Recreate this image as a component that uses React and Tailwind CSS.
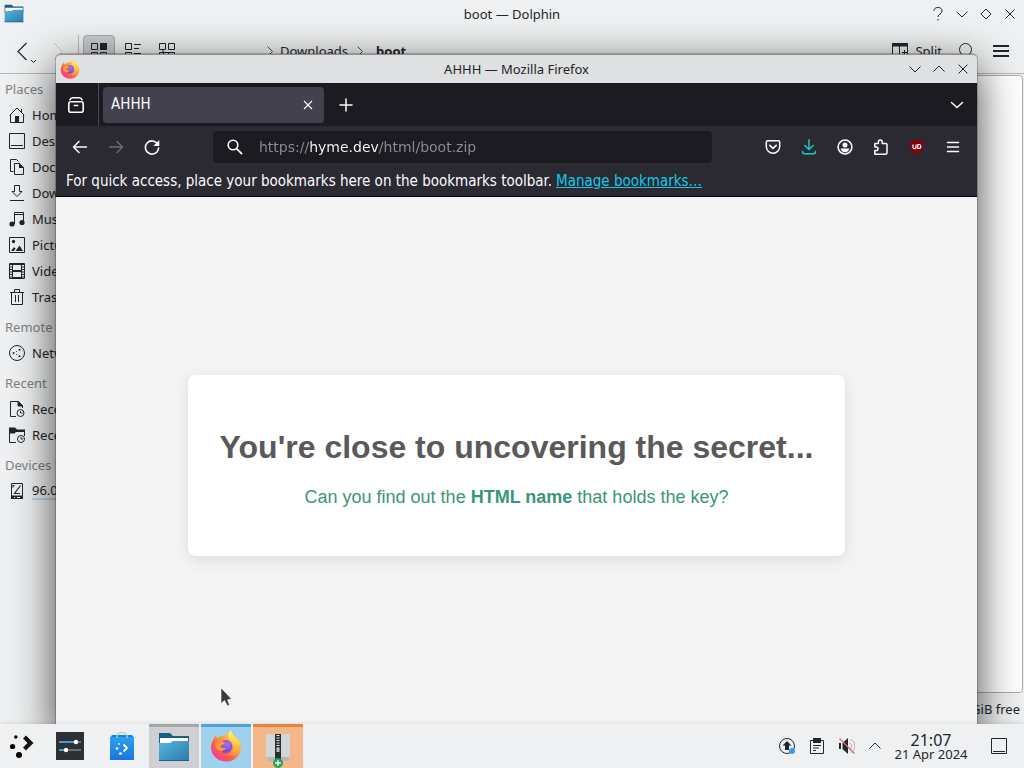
import React from "react";

const sans = "font-['Noto_Sans',sans-serif]";

/* ---------- shared glyphs ---------- */

function Svg({ size = 16, box = 16, className = "", children }) {
  return (
    <svg
      width={size}
      height={size}
      viewBox={`0 0 ${box} ${box}`}
      fill="none"
      stroke="currentColor"
      className={`shrink-0 ${className}`}
      aria-hidden="true"
    >
      {children}
    </svg>
  );
}

const Down = () => <Svg><path d="M2.5 5.5 8 11l5.500-5.500" /></Svg>;
const Up = () => <Svg><path d="M2.500 10.500 8 5l5.500 5.500" /></Svg>;
const Cross = () => <Svg><path d="m3.500 3.500 9 9m0-9-9 9" /></Svg>;
const Crumb = () => <Svg className="text-[#4a4d50]"><path d="m5.500 3.500 5 5-5 5" /></Svg>;

function FolderIcon({ size, id }) {
  return (
    <svg width={size} height={size} viewBox="0 0 32 32" aria-hidden="true" className="shrink-0">
      <defs>
        <linearGradient id={id} x1="0" y1="0" x2="1" y2="1">
          <stop offset="0" stopColor="#56b7df" />
          <stop offset="1" stopColor="#2a79ab" />
        </linearGradient>
      </defs>
      <path d="M1 1h11l3 3h16v10H1z" fill="#1b5f82" />
      <path d="M2 6h28v8H2z" fill="#fff" />
      <path d="M1 11h11l3-2h16v20H1z" fill={`url(#${id})`} />
      <path d="M1 28h30v1H1z" fill="#1f5f88" />
    </svg>
  );
}

function FirefoxLogo({ size, id }) {
  return (
    <svg width={size} height={size} viewBox="0 0 32 32" aria-hidden="true" className="shrink-0">
      <defs>
        <linearGradient id={`${id}a`} x1="0.850" y1="0.100" x2="0.150" y2="0.950">
          <stop offset="0" stopColor="#ffe94a" />
          <stop offset="0.350" stopColor="#ffa63a" />
          <stop offset="0.650" stopColor="#ff5f52" />
          <stop offset="1" stopColor="#f0389a" />
        </linearGradient>
        <radialGradient id={`${id}b`} cx="0.600" cy="0.300" r="0.800">
          <stop offset="0" stopColor="#a66cf0" />
          <stop offset="1" stopColor="#6548c4" />
        </radialGradient>
        <linearGradient id={`${id}c`} x1="0.500" y1="0" x2="0.500" y2="1">
          <stop offset="0" stopColor="#fff36b" />
          <stop offset="0.500" stopColor="#ffcf4c" />
          <stop offset="1" stopColor="#ff8a48" />
        </linearGradient>
      </defs>
      <path
        d="M2.500 11.500C3.200 8.500 5 6.300 6.300 5.200c0 1.700.4 2.700 1.100 3.400C9.800 6 13.500 5 16.500 5.300 18 3.200 19.400 1.300 21 .2c.4 3 2.200 4.600 4.200 6.600 1 1 1.600 2 2 3l.8-1.600c2 3 3.300 6.300 3 10.200C30.400 26 24 31.600 16 31.600S1.400 25.500 1 18c-.1-2.300.5-4.700 1.500-6.500z"
        fill={`url(#${id}a)`}
      />
      <circle cx="16" cy="16.500" r="6.400" fill={`url(#${id}b)`} />
      <path
        d="M21 .2c-2.600 3.200-3.400 6-1.600 8.700 2 2.500 4.400 4.600 4.200 8.400-.2 4.300-3 7.300-6.900 8.100 6.300 1.700 12.800-2.700 12.700-9.600C29.400 9 22.400 6.600 21 .2z"
        fill={`url(#${id}c)`}
      />
      <path
        d="M5.200 12.600c1.700-1.500 4-1.700 6-.8 1.800-.3 3 .1 4 1.200-1 1.400-2.500 1.900-4.200 2.100-.5 1.600.3 2.600 1.800 2.900 1.500.1 2.200 0 3.200.1-1.300 2.300-4.100 3.700-7.100 2.500-3-1.200-4.100-4.300-3.700-8z"
        fill="#ff9537"
      />
    </svg>
  );
}

/* ---------- file manager ---------- */

const placeIcons = {
  home: (
    <Svg>
      <path d="M.7 8.300 8 1l7.300 7.300M1.500 8v7.500h13V8M12.500 2v3" />
      <path d="M6 9h4v6.500H6z" fill="currentColor" stroke="none" />
    </Svg>
  ),
  desktop: <Svg><path d="M.5.5h15v15H.5zM2 12.500h12" /></Svg>,
  documents: (
    <Svg>
      <path d="M4.500 12.500h-3V.5h6l2 2M5.500 4.500h5l4 4v7h-9z" />
      <path d="M10 3.500v5.500h5.200z" fill="currentColor" stroke="none" />
    </Svg>
  ),
  downloads: <Svg><path d="M1 15.500h14M5.500.5h5v6H13l-5 5-5-5h2.500z" /></Svg>,
  music: (
    <Svg>
      <path d="M5.500 13V1.500h9V11M5.500 3.500h9" />
      <circle cx="3" cy="13" r="2.600" fill="currentColor" stroke="none" />
      <circle cx="13" cy="11.500" r="2.600" fill="currentColor" stroke="none" />
    </Svg>
  ),
  pictures: (
    <Svg>
      <path d="M.5.5h15v15H.5z" />
      <circle cx="4.500" cy="4.500" r="1.700" fill="currentColor" stroke="none" />
      <path d="m2 14 3-4 1.500 1.500L5 14zM6.500 14l4-5.500L14 14z" fill="currentColor" stroke="none" />
    </Svg>
  ),
  videos: (
    <Svg>
      <path d="M.5.500h15v15H.5zM3.500 0v16M12.500 0v16M4 1.500h8M4 14.500h8" />
      <path d="M4 8h8" strokeWidth="2" />
      <path d="M2 1v14M14 1v14" strokeWidth="2" strokeDasharray="1 1.500" />
    </Svg>
  ),
  trash: <Svg><path d="M1 3.500h14M5.500 3V.5h5V3M2.500 3.500v12h11v-12M6.500 6v7M9.500 6v7" /></Svg>,
  network: (
    <Svg>
      <circle cx="8" cy="8" r="7.500" />
      <g fill="currentColor" stroke="none">
        <circle cx="4.600" cy="8" r="1" />
        <circle cx="10.500" cy="4.800" r="1" />
        <circle cx="10.500" cy="11.200" r="1" />
        <circle cx="7.500" cy="6.400" r=".5" />
        <circle cx="7.500" cy="9.600" r=".5" />
      </g>
    </Svg>
  ),
  files: (
    <Svg>
      <path d="M7 15.500H1.500V.5h8l4 4V7" />
      <path d="M9 .5V5h5z" fill="currentColor" />
      <circle cx="11.500" cy="12" r="3.500" />
      <path d="M11.500 10v2h2" />
    </Svg>
  ),
  locations: (
    <Svg>
      <path d="M7 15.500H.5V2M15.500 4v5" />
      <path d="M0 .5h6l2 2h8V5H7L5.500 6.500H0z" fill="currentColor" stroke="none" />
      <circle cx="12" cy="12" r="3.500" />
      <path d="M12 10v2h2" />
    </Svg>
  ),
  drive: (
    <Svg>
      <path d="M2.500.5h11v15h-11z" />
      <path d="M2.500 13h11v2.500h-11z" fill="currentColor" />
      <path d="M11.500 2.500 5.500 10.500H11M5.500 2.500h-1.500v2" strokeWidth="1.200" />
      <path d="M5 14.500h1M8 14.500h3" stroke="#fff" />
    </Svg>
  ),
};

const places = [
  { title: "Places", items: [["home", "Home"], ["desktop", "Desktop"], ["documents", "Documents"], ["downloads", "Downloads"], ["music", "Music"], ["pictures", "Pictures"], ["videos", "Videos"], ["trash", "Trash"]] },
  { title: "Remote", items: [["network", "Network"]] },
  { title: "Recent", items: [["files", "Recent Files"], ["locations", "Recent Locations"]] },
];

function WindowButton({ label, children }) {
  return (
    <button aria-label={label} className="flex size-6 items-center justify-center">
      {children}
    </button>
  );
}

function SectionTitle({ children }) {
  return <h2 className="flex h-[26px] items-center pt-0.5 pl-[5px] text-[#7f8284]">{children}</h2>;
}

function FileManager() {
  return (
    <section aria-label="boot — Dolphin" className="flex h-full flex-col bg-[#eff0f1] text-[13px] text-[#232629]">
      <header className="grid h-7 grid-cols-[1fr_auto_1fr] items-center">
        <span className="pl-1"><FolderIcon size={20} id="folderTitle" /></span>
        <span className="pt-0.5">boot — Dolphin</span>
        <div className="flex justify-end pr-0.5">
          <WindowButton label="Help">
            <Svg><path d="M4 5c0-2.500 1.500-3.500 4-3.500s4 1 4 3.500c0 3-4 3-4 6M8 13v1.500" /></Svg>
          </WindowButton>
          <WindowButton label="Minimize"><Down /></WindowButton>
          <WindowButton label="Maximize"><Svg><path d="m8 3 5 5-5 5-5-5z" /></Svg></WindowButton>
          <WindowButton label="Close"><Cross /></WindowButton>
        </div>
      </header>

      <div className="flex h-[46px] items-center border-b border-[#b4b6b8] pr-[15px]">
        <button aria-label="Back" className="flex h-8 w-[38px] items-center justify-end">
          <Svg size={24} box={24}><path d="M12.500 4 4 12.500l8.500 8.500" strokeWidth="1.200" /><path d="m17 21 2.500 2.500L22 21" /></Svg>
        </button>
        <button aria-label="Forward" className="flex h-8 w-10 items-center justify-center text-[#c3c5c7]">
          <Svg size={24} box={24}><path d="m8 4 8.500 8.500L8 21" /></Svg>
        </button>
        <span className="h-8 w-px bg-[#b9bbbd]" />
        <div className="ml-1 flex gap-0.5">
          <button aria-label="Icons view" className="flex size-8 items-center justify-center rounded-sm border border-[#a9abad] bg-[#c9cbcd]">
            <Svg><path d="M.5.500h6v6h-6zM.5 9.500h6v6h-6zM9.500 9.500h6v6h-6z" /><path d="M9 0h7v7H9z" fill="currentColor" stroke="none" /></Svg>
          </button>
          <button aria-label="Compact view" className="flex size-8 items-center justify-center">
            <Svg><path d="M.5.500h6v6h-6zM.5 9.500h6v6h-6zM9 1.500h7M9 5.500h5M9 10.500h7M9 14.500h5" /></Svg>
          </button>
          <button aria-label="Details view" className="flex size-8 items-center justify-center">
            <Svg><path d="M.5.500h6v6h-6zM9.500.500h6v6h-6zM.5 9.500h4v6h-4zM9.500 9.500h6v6h-6zM4 6.500v3h6" /></Svg>
          </button>
        </div>
        <nav aria-label="Location" className="ml-[79px] flex flex-1 items-center">
          <Crumb />
          <a href="#downloads" className="mr-1 ml-0.5 pt-0.5">Downloads</a>
          <Crumb />
          <a href="#boot" className="ml-2 pt-0.5 font-bold">boot</a>
        </nav>
        <button className="mr-4 flex items-center gap-[7px]">
          <Svg><path d="M.5 2v13.500h15V2M7.500 2v14M10 9.500h5M12.500 7v5" /><path d="M0 0h16v3.500H0z" fill="currentColor" stroke="none" /></Svg>
          <span className="pt-0.5">Split</span>
        </button>
        <button aria-label="Search" className="mr-[19px]"><Svg><circle cx="7.500" cy="6.500" r="6" /><path d="m12 11 4 4.500" /></Svg></button>
        <button aria-label="Menu"><Svg><path d="M0 3h16M0 8h16M0 13h16" strokeWidth="2" /></Svg></button>
      </div>

      <div className="flex min-h-0 flex-1">
        <aside className="w-44 pt-0.5">
          {places.map((g, i) => (
            <div key={g.title} className={i ? "pt-1" : ""}>
              <SectionTitle>{g.title}</SectionTitle>
              <ul>
                {g.items.map(([icon, name]) => (
                  <li key={name} className="flex h-[26px] items-center gap-[7px] pl-[9px] whitespace-nowrap">
                    {placeIcons[icon]}
                    <span className="pt-0.5">{name}</span>
                  </li>
                ))}
              </ul>
            </div>
          ))}
          <div className="pt-1">
            <SectionTitle>Devices</SectionTitle>
            <div className="flex h-[26px] items-center gap-[7px] pl-[9px]">
              {placeIcons.drive}
              <span className="flex-1 border-b-2 border-[#bcd8ec] leading-4 whitespace-nowrap">96.0 GiB Drive</span>
            </div>
          </div>
        </aside>
        <div className="flex flex-1 flex-col">
          <div className="mt-px mr-px flex-1 rounded border border-[#a9abad] bg-white" />
          <p className="flex h-[31px] items-center justify-end pt-0.5 pr-1">GiB free</p>
        </div>
      </div>
    </section>
  );
}

/* ---------- browser ---------- */

function ToolButton({ label, className = "", children }) {
  return (
    <button aria-label={label} className={`flex h-8 w-9 items-center justify-center ${className}`}>
      {children}
    </button>
  );
}

function Browser() {
  return (
    <section
      aria-label="AHHH — Mozilla Firefox"
      className="absolute top-[54px] right-[47px] -bottom-[10px] left-[56px] flex flex-col rounded-t-[5px] font-['DejaVu_Sans_Condensed','DejaVu_Sans',sans-serif] shadow-[0_0_0_1px_rgba(0,0,0,0.2),0_12px_44px_rgba(0,0,0,0.75)]"
    >
      <header className="grid h-[29px] grid-cols-[1fr_auto_1fr] items-center rounded-t-[5px] border-t border-[#8f9193] bg-[#dee0e2] font-['Noto_Sans',sans-serif] text-[13px] text-[#232629]">
        <span className="pl-1"><FirefoxLogo size={20} id="ffTitle" /></span>
        <span className="pt-0.5">AHHH — Mozilla Firefox</span>
        <div className="flex justify-end pr-0.5">
          <WindowButton label="Minimize"><Down /></WindowButton>
          <WindowButton label="Maximize"><Up /></WindowButton>
          <WindowButton label="Close"><Cross /></WindowButton>
        </div>
      </header>

      <div className="flex h-[43px] items-center bg-[#1c1b22] text-[#fbfbfe]">
        <button aria-label="Firefox View" className="flex w-[42px] justify-center pr-0.5">
          <Svg>
            <rect x=".8" y="4.800" width="14.400" height="10.400" rx="2" strokeWidth="1.600" />
            <path d="M2 2.800C2.400 1.500 3 .8 4.500.8h7c1.500 0 2.100.7 2.500 2M6.300 8.500h3.400" strokeWidth="1.600" strokeLinecap="round" />
          </Svg>
        </button>
        <span className="h-full w-px bg-[#4c4b55]" />
        <div className="ml-1 flex h-9 w-[221px] items-center justify-between rounded bg-[#42414d] pr-2 pl-2 text-[15px]">
          <span>AHHH</span>
          <button aria-label="Close tab"><Svg><path d="m4 4 8 8m0-8-8 8" strokeWidth="1.200" /></Svg></button>
        </div>
        <button aria-label="New tab" className="ml-3.5"><Svg><path d="M8 2v12M2 8h12" strokeWidth="1.500" strokeLinecap="round" /></Svg></button>
        <button aria-label="List all tabs" className="mr-3 ml-auto"><Svg><path d="m2.500 5.500 5.500 5 5.500-5" strokeWidth="1.500" strokeLinecap="round" /></Svg></button>
      </div>

      <div className="flex h-[42px] items-center bg-[#2b2a33] px-1.5 text-[#fbfbfe]">
        <ToolButton label="Back"><Svg><path d="M14.500 8H2M7 2.500 1.500 8 7 13.500" strokeWidth="1.500" strokeLinecap="round" strokeLinejoin="round" /></Svg></ToolButton>
        <ToolButton label="Forward" className="text-[#6c6b74]"><Svg><path d="M1.500 8H14M9 2.500 14.500 8 9 13.500" strokeWidth="1.500" strokeLinecap="round" strokeLinejoin="round" /></Svg></ToolButton>
        <ToolButton label="Reload">
          <Svg><path d="M13.800 5.300A6.600 6.600 0 1 0 14.600 9" strokeWidth="1.600" strokeLinecap="round" /><path d="M15.300 1v6H9.400z" fill="currentColor" stroke="none" /></Svg>
        </ToolButton>
        <div className="mx-[43px] flex h-8 flex-1 items-center gap-4 rounded bg-[#1c1b22] pl-3.5">
          <Svg><circle cx="6" cy="6" r="4.800" strokeWidth="1.600" /><path d="m9.600 9.600 5 5" strokeWidth="1.700" strokeLinecap="round" /></Svg>
          <input
            aria-label="Address"
            defaultValue="https://hyme.dev/html/boot.zip"
            className="h-6 min-w-0 flex-1 bg-[linear-gradient(90deg,#8d8c93_50px,#fbfbfe_50px,#fbfbfe_120px,#8d8c93_120px)] bg-clip-text font-['DejaVu_Sans',sans-serif] text-[14px] text-transparent outline-none"
          />
        </div>
        <ToolButton label="Save to Pocket">
          <Svg><path d="M2.800 1.800h10.400c.9 0 1.500.6 1.500 1.500V7.500a6.700 6.700 0 0 1-13.400 0V3.300c0-.9.6-1.500 1.500-1.500z" strokeWidth="1.500" /><path d="M4.800 6.300 8 9.300l3.200-3" strokeWidth="1.600" strokeLinecap="round" /></Svg>
        </ToolButton>
        <ToolButton label="Downloads" className="text-[#19c9c4]">
          <Svg><path d="M8 .8v9.500M3.800 6.500 8 10.500l4.200-4M1.500 12.500c0 1.700.7 2.200 2 2.200h9c1.300 0 2-.5 2-2.200" strokeWidth="1.500" strokeLinecap="round" /></Svg>
        </ToolButton>
        <ToolButton label="Account">
          <Svg><circle cx="8" cy="8" r="6.900" strokeWidth="1.500" /><circle cx="8" cy="6" r="2.500" fill="currentColor" stroke="none" /><path d="M3.600 9.600h8.800c-.5 2.400-2.200 3.700-4.400 3.700s-3.900-1.300-4.400-3.700z" fill="currentColor" stroke="none" /></Svg>
        </ToolButton>
        <ToolButton label="Extensions">
          <Svg><path d="M1.800 15.200V11.500h1.400a1.800 1.800 0 0 0 0-3.600H1.800V4.500h3.600V2.900a1.900 1.900 0 0 1 3.800 0v1.600h3.500c.8 0 1.300.5 1.300 1.300v8c0 .8-.5 1.400-1.300 1.400z" strokeWidth="1.500" strokeLinejoin="round" /></Svg>
        </ToolButton>
        <ToolButton label="uBlock Origin">
          <Svg>
            <path d="M8 .3C6 1.800 3.500 2.200 1 2.200c0 6 .5 10.500 7 13.500 6.500-3 7-7.500 7-13.500C12.500 2.200 10 1.800 8 .3z" fill="#850009" stroke="none" />
            <path d="M4 5.500v2.700a1.500 1.500 0 0 0 3 0V5.500M8.800 5.500v4h1.200a1.800 2 0 0 0 0-4z" stroke="#fff" strokeWidth="1.200" />
          </Svg>
        </ToolButton>
        <ToolButton label="Application menu"><Svg><path d="M2.500 3.500h11M2.500 8h11M2.500 12.500h11" strokeWidth="1.500" strokeLinecap="round" /></Svg></ToolButton>
      </div>

      <p className="flex h-[29px] items-center gap-1 border-b border-black bg-[#2b2a33] pb-0.5 pl-2.5 text-[15px] whitespace-nowrap text-[#fbfbfe]">
        For quick access, place your bookmarks here on the bookmarks toolbar.
        <a href="#bookmarks" className="text-[#10c9e8] underline">Manage bookmarks…</a>
      </p>

      <main className="flex flex-1 items-center justify-center bg-[#f4f4f4] font-['Liberation_Sans',Arial,sans-serif]">
        <div className="rounded-lg bg-white px-8 pt-[54px] pb-[49px] text-center shadow-[0_4px_16px_rgba(0,0,0,0.1)]">
          <h1 className="text-[32px] leading-[37px] font-bold text-[#5a5a5a]">You're close to uncovering the secret...</h1>
          <p className="mt-[21px] text-[18px] leading-5 text-[#3a9679]">
            Can you find out the <strong>HTML name</strong> that holds the key?
          </p>
        </div>
      </main>
    </section>
  );
}

/* ---------- panel ---------- */

function Task({ label, className = "", children }) {
  return (
    <button aria-label={label} className={`flex w-[50px] items-center justify-center ${className}`}>
      {children}
    </button>
  );
}

function Panel() {
  return (
    <footer className="relative flex h-11 shrink-0 items-stretch bg-[#eff0f2] text-[#232629] shadow-[0_-1px_4px_rgba(0,0,0,0.1)]">
      <div className="flex flex-1 gap-0.5">
        <button aria-label="Application launcher" className="flex w-[43px] items-center justify-center">
          <svg width="24" height="24" viewBox="0 0 24 24" aria-hidden="true">
            <circle cx="5.800" cy="3" r="1.700" /><circle cx="2.600" cy="12.500" r="2.600" /><circle cx="9" cy="21" r="3" />
            <path d="m14.500 3 6 6-6 6" fill="none" stroke="#111" strokeWidth="4.200" />
          </svg>
        </button>
        <Task label="System Settings">
          <svg width="28" height="28" viewBox="0 0 28 28" aria-hidden="true">
            <path d="M0 0h28v28H0z" fill="#2d3136" />
            <path d="M3 10h22M3 18h22" stroke="#686e74" strokeWidth="2" />
            <path d="M3 10h16M3 18h6" stroke="#3daee9" strokeWidth="1.500" />
            <circle cx="20" cy="10" r="2.200" fill="#fff" /><circle cx="10" cy="18" r="2.200" fill="#fff" />
          </svg>
        </Task>
        <Task label="Discover">
          <svg width="28" height="28" viewBox="0 0 28 28" aria-hidden="true">
            <defs><linearGradient id="bag" x1="0" y1="0" x2="0" y2="1"><stop offset="0" stopColor="#2aa2f0" /><stop offset="1" stopColor="#1b74dc" /></linearGradient></defs>
            <path d="M4 3h20l2 3H2z" fill="#1d7fc5" />
            <path d="M2 5h24v23H2z" fill="url(#bag)" />
            <path d="M9 6V4.500a5 4 0 0 1 10 0V6" fill="none" stroke="#a5d2df" strokeWidth="1.400" />
            <path d="m15.500 12.500 3.500 3.500-3.500 3.500" fill="none" stroke="#fff" strokeWidth="1.800" />
            <g fill="#cfe8ff"><circle cx="11" cy="12" r="1" /><circle cx="9" cy="16.500" r="1.400" /><circle cx="12.500" cy="21.500" r="1.600" /></g>
          </svg>
        </Task>
        <Task label="boot — Dolphin" className="border-t-[3px] border-[#a5a6a8] bg-[#cfd0d3]"><FolderIcon size={32} id="folderTask" /></Task>
        <Task label="AHHH — Mozilla Firefox" className="border-t-[3px] border-[#4ea4d6] bg-[#9fd0ec] pb-1"><FirefoxLogo size={32} id="ffTask" /></Task>
        <Task label="Ark" className="border-t-[3px] border-[#e5843a] bg-[#f3b78b]">
          <svg width="28" height="40" viewBox="0 0 28 40" aria-hidden="true">
            <path d="M2 6h24v23l-2 4H4l-2-4z" fill="#d3d6d8" />
            <path d="M2 29h24l-2 4H4z" fill="#b4b8bb" />
            <path d="M11 6h6v26h-6z" fill="#2a2d30" />
            <path d="M14 7v15" stroke="#e4e6e8" strokeWidth="3" strokeDasharray="1 1.500" />
            <path d="M12.500 20h3v4h-3z" fill="#b9bdc0" />
            <circle cx="14" cy="35" r="5" fill="#27a35c" />
            <path d="M14 32.200v5.600M11.200 35h5.600" stroke="#fff" strokeWidth="1.400" />
          </svg>
        </Task>
      </div>

      <div className="flex items-center">
        <button aria-label="Updates" className="flex w-[30px] justify-center">
          <Svg><circle cx="8" cy="8" r="7.500" /><path d="M8 3 3.500 7.500H6V12h4V7.500h2.500z" fill="currentColor" stroke="none" /><circle cx="13" cy="13" r="3" fill="#3d9be9" stroke="none" /></Svg>
        </button>
        <button aria-label="Clipboard" className="flex w-[30px] justify-center">
          <Svg><path d="M1.500 2.500h13v13h-13zM4 7.500h8M4 10h6M4 12.500h3" /><path d="M4 0h8v5H4z" fill="currentColor" stroke="none" /></Svg>
        </button>
        <button aria-label="Volume" className="flex w-[30px] justify-center">
          <Svg>
            <path d="M0 5h2v6H0zM3.500 5 9 0v16l-5.500-5z" fill="currentColor" stroke="none" />
            <path d="M10.500 4.500a4 4 0 0 1 0 7M11.500 1.500a7 7 0 0 1 0 13" stroke="#c9a1a7" />
            <path d="m.5.500 15 15" stroke="#d16a76" strokeWidth="1.200" />
          </Svg>
        </button>
        <button aria-label="Show hidden icons" className="flex w-[26px] justify-center"><Up /></button>
        <time className="flex w-[86px] flex-col items-center">
          <span className="text-[16px] leading-4">21:07</span>
          <span className="text-[13px] leading-3">21 Apr 2024</span>
        </time>
        <button aria-label="Peek at desktop" className="flex w-[50px] justify-center">
          <Svg><path d="M.5.500h15v15H.5zM2 13.500h12" /></Svg>
        </button>
      </div>
    </footer>
  );
}

export default function App() {
  return (
    <div className={`flex h-screen flex-col overflow-hidden ${sans}`}>
      <div className="relative min-h-0 flex-1">
        <FileManager />
        <Browser />
        <svg width="12" height="20" viewBox="0 0 12 20" aria-hidden="true" className="absolute top-[687px] left-[220px]">
          <path d="M1 .8v15.700l3.500-3 3 5.500 2-1.200-2-5 4-.8z" fill="#3b3b3b" stroke="#fff" strokeWidth=".6" />
        </svg>
      </div>
      <Panel />
    </div>
  );
}
